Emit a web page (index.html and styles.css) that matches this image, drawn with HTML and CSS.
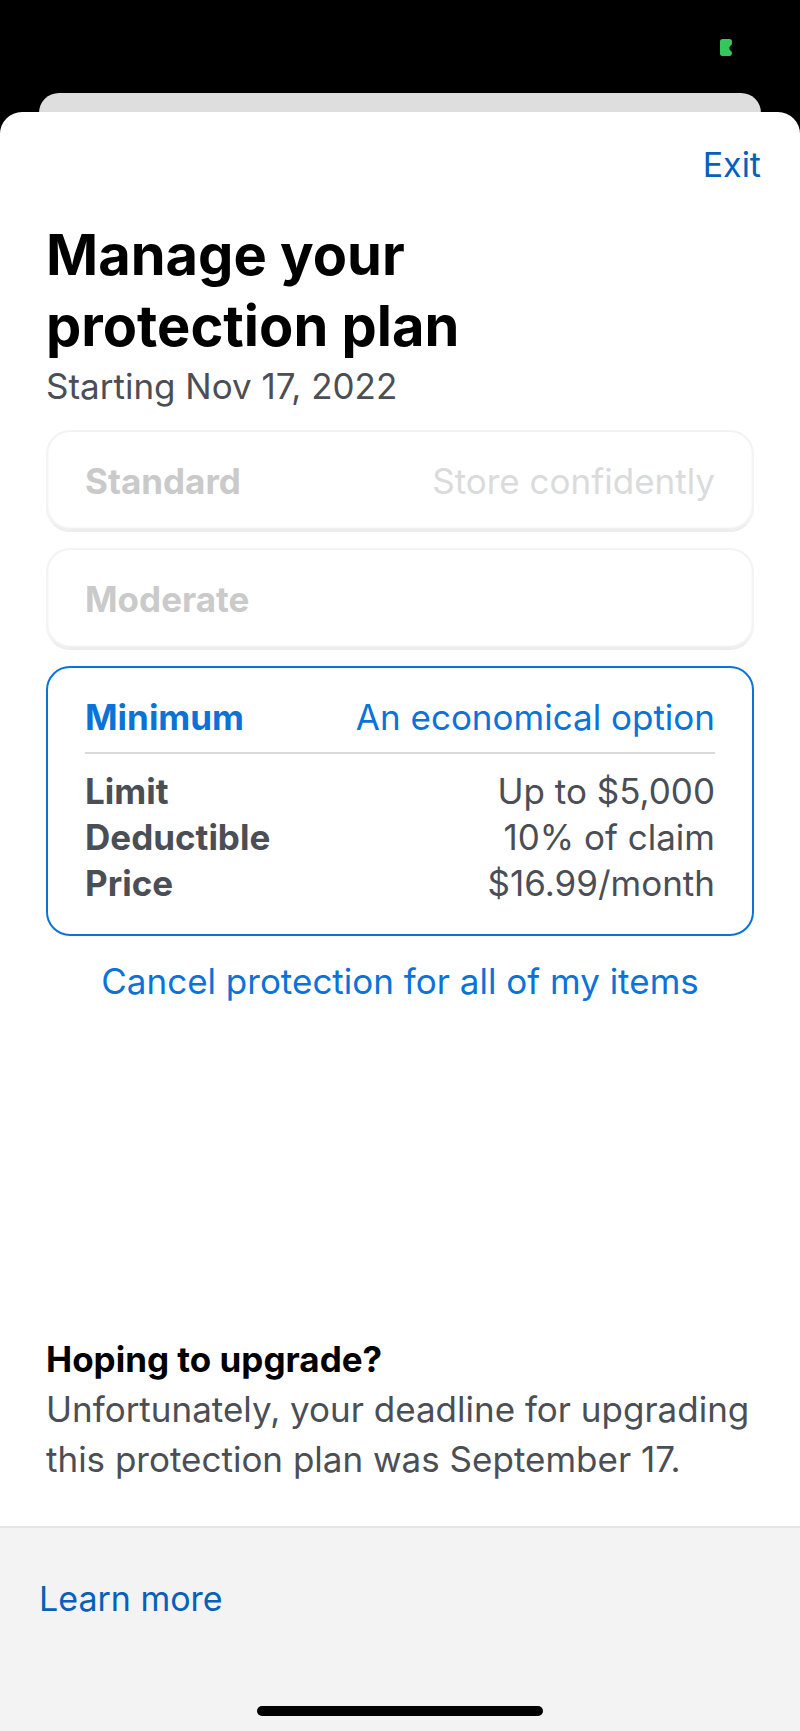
FILE: index.html
```html
<!DOCTYPE html>
<html lang="en">
<head>
<meta charset="utf-8">
<meta name="viewport" content="width=device-width, initial-scale=1">
<title>Manage your protection plan</title>
<link rel="stylesheet" href="styles.css">
</head>
<body>
<div class="status">
  <svg class="camera" width="12" height="17" viewBox="0 0 12 17" aria-hidden="true"><path d="M2.5 0H9.5Q12 0 12 2.5V4.5Q12 5.5 11 6.2Q9.5 7.5 9.3 9Q9.3 11 11 12Q12 12.500 12 14Q11.800 17 9.5 17H2.500Q0 17 0 14.500V2.500Q0 0 2.500 0Z" fill="#34c759"/></svg>
</div>
<div class="behind"></div>
<div class="sheet">
  <header class="nav"><button class="exit" type="button">Exit</button></header>
  <main class="main">
    <h1 class="title">Manage your<br>protection plan</h1>
    <p class="start">Starting Nov 17, 2022</p>
    <div class="plans">
      <button class="plan" type="button" disabled><strong>Standard</strong><span class="faint">Store confidently</span></button>
      <button class="plan" type="button" disabled><strong>Moderate</strong></button>
      <section class="selected">
        <div class="selected-head"><strong>Minimum</strong><span>An economical option</span></div>
        <dl class="details">
          <div class="row"><dt>Limit</dt><dd>Up to $5,000</dd></div>
          <div class="row"><dt>Deductible</dt><dd>10% of claim</dd></div>
          <div class="row"><dt>Price</dt><dd>$16.99/month</dd></div>
        </dl>
      </section>
    </div>
    <button class="cancel" type="button">Cancel protection for all of my items</button>
    <section class="upgrade">
      <h2>Hoping to upgrade?</h2>
      <p>Unfortunately, your deadline for upgrading this protection plan was September 17.</p>
    </section>
  </main>
  <footer class="footer">
    <a class="learn" href="#learn">Learn more</a>
    <div class="home"></div>
  </footer>
</div>
</body>
</html>
```
FILE: styles.css
```css
* { box-sizing: border-box; margin: 0; padding: 0; }
body { min-height: 100vh; display: flex; flex-direction: column; background: #000; color: #000; font-family: Inter, "Liberation Sans", sans-serif; font-size: 35px; line-height: 46px; }
button { font: inherit; color: inherit; background: none; border: 0; cursor: pointer; }
.status { height: 93px; padding: 39px 68px 0; display: flex; justify-content: flex-end; }
.behind { height: 38px; margin: 0 39px -19px; border-radius: 20px 20px 0 0; background: #dedede; }
.sheet { position: relative; flex: 1; display: flex; flex-direction: column; border-radius: 22px 22px 0 0; background: #fff; overflow: hidden; }
.nav { display: flex; justify-content: flex-end; padding: 30px 39px 0; }
.exit { color: #0561b9; font-size: 34px; }
.main { flex: 1; display: flex; flex-direction: column; padding: 32px 46px 42px; }
.title { font-size: 56px; line-height: 71px; font-weight: 700; }
.start { color: #4b4e55; line-height: 48px; }
.plans { display: flex; flex-direction: column; gap: 16px; margin-top: 20px; }
.plan { display: flex; justify-content: space-between; align-items: center; min-height: 102px; padding: 0 37px; border: 2px solid #f3f3f3; border-bottom-color: #ededed; border-radius: 24px; box-shadow: inset 0 -2px 2px #ededed; color: #cacaca; cursor: default; }
.faint { color: #dadbdc; }
.selected { padding: 26px 37px 28px; border: 2px solid #0b73d8; border-radius: 24px; color: #0b73d8; }
.selected-head { display: flex; justify-content: space-between; padding-bottom: 12px; border-bottom: 2px solid #d9d9d9; }
.details { padding-top: 14px; color: #4b4e55; }
.row { display: flex; justify-content: space-between; }
.row dt { font-weight: 700; }
.cancel { margin-top: 22px; color: #0b73d8; }
.upgrade { margin-top: auto; color: #4b4e55; line-height: 50px; }
.upgrade h2 { font-size: 35px; font-weight: 700; color: #000; }
.footer { display: flex; flex-direction: column; justify-content: space-between; min-height: 205px; padding: 48px 39px 15px; border-top: 2px solid #e4e4e4; background: #f3f3f3; }
.learn { align-self: flex-start; color: #0561b9; font-size: 34px; text-decoration: none; }
.home { align-self: center; width: 286px; height: 10px; border-radius: 5px; background: #000; }
```
